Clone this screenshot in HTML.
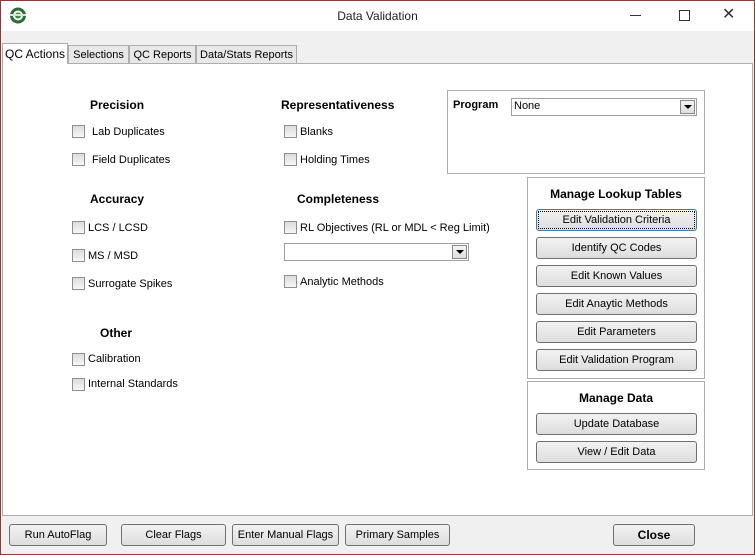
<!DOCTYPE html><html><head><style>
body{margin:0;width:755px;height:555px;overflow:hidden;font-family:"Liberation Sans",Arial,sans-serif;font-size:11px;color:#000;background:#f0f0f0;position:relative}
.a{position:absolute}
.win{left:0;top:0;width:753px;height:553px;border:1px solid #8b3a3a;background:#f0f0f0}
.tb{left:1px;top:1px;width:753px;height:30px;background:#fff}
.panel{left:2px;top:63px;width:749px;height:451px;background:#fff;border:1px solid #adadad}
.tab{top:45px;height:18px;border:1px solid #adadad;border-bottom:none;background:#e8e8e8;line-height:19px;text-align:center;font-size:11px;box-sizing:border-box}
.h{font-weight:bold;font-size:12px}
.cb{width:11px;height:11px;border:1px solid #8e8f8f;background:linear-gradient(#dcdcdc,#f6f6f6)}
.btn{height:20px;border:1px solid #707070;border-radius:3px;background:linear-gradient(#f2f2f2,#dddddd);text-align:center;line-height:20px;font-size:11px}
.grp{border:1px solid #adadad}
.dd{height:16px;border:1px solid #a0a0a0;background:#fff}
.arr{position:absolute;right:1px;top:1px;width:13px;height:12px;border:1px solid #888;background:linear-gradient(#f5f5f5,#ddd)}
.arr:after{content:"";position:absolute;left:3px;top:4px;border-left:4px solid transparent;border-right:4px solid transparent;border-top:4px solid #000}
</style></head><body>
<div class="a win"></div>
<div class="a tb"></div>
<svg class="a" style="left:9px;top:7px" width="18" height="17"><circle cx="9" cy="8.5" r="8" fill="#2f6b3a"/><circle cx="9" cy="8.5" r="5" fill="#fff"/><circle cx="9" cy="8.5" r="3" fill="#3d8b4a"/><rect x="1" y="7" width="16" height="2" fill="#cfe8cf"/></svg>
<div class="a" style="left:0;width:755px;top:9px;text-align:center;font-size:12px;color:#222">Data Validation</div>
<div class="a" style="left:630px;top:15px;width:11px;height:1px;background:#333"></div>
<div class="a" style="left:679px;top:10px;width:9px;height:9px;border:1px solid #333"></div>
<div class="a" style="left:722px;top:4px;font-size:16px;color:#333">✕</div>
<div class="a panel"></div>
<div class="a tab" style="left:2px;top:43px;width:66px;height:21px;background:#fff;line-height:20px;font-size:12px">QC Actions</div>
<div class="a tab" style="left:68px;width:61px">Selections</div>
<div class="a tab" style="left:129px;width:67px">QC Reports</div>
<div class="a tab" style="left:196px;width:101px">Data/Stats Reports</div>

<div class="a h" style="left:90px;top:98px">Precision</div>
<div class="a cb" style="left:72px;top:125px"></div><div class="a" style="left:92px;top:126px">Lab Duplicates</div>
<div class="a cb" style="left:72px;top:153px"></div><div class="a" style="left:92px;top:154px">Field Duplicates</div>
<div class="a h" style="left:90px;top:192px">Accuracy</div>
<div class="a cb" style="left:72px;top:221px"></div><div class="a" style="left:88px;top:222px">LCS / LCSD</div>
<div class="a cb" style="left:72px;top:249px"></div><div class="a" style="left:88px;top:250px">MS / MSD</div>
<div class="a cb" style="left:72px;top:277px"></div><div class="a" style="left:88px;top:278px">Surrogate Spikes</div>
<div class="a h" style="left:100px;top:326px">Other</div>
<div class="a cb" style="left:72px;top:353px"></div><div class="a" style="left:88px;top:353px">Calibration</div>
<div class="a cb" style="left:72px;top:378px"></div><div class="a" style="left:88px;top:378px">Internal Standards</div>

<div class="a h" style="left:281px;top:98px">Representativeness</div>
<div class="a cb" style="left:284px;top:125px"></div><div class="a" style="left:300px;top:126px">Blanks</div>
<div class="a cb" style="left:284px;top:153px"></div><div class="a" style="left:300px;top:154px">Holding Times</div>
<div class="a h" style="left:297px;top:192px">Completeness</div>
<div class="a cb" style="left:284px;top:221px"></div><div class="a" style="left:300px;top:222px">RL Objectives (RL or MDL &lt; Reg Limit)</div>
<div class="a dd" style="left:284px;top:243px;width:183px"><div class="arr"></div></div>
<div class="a cb" style="left:284px;top:275px"></div><div class="a" style="left:300px;top:276px">Analytic Methods</div>

<div class="a grp" style="left:447px;top:90px;width:256px;height:82px"></div>
<div class="a" style="left:453px;top:99px;font-weight:bold">Program</div>
<div class="a dd" style="left:511px;top:98px;width:184px"><span style="position:absolute;left:2px;top:1px">None</span><div class="arr"></div></div>

<div class="a grp" style="left:527px;top:177px;width:176px;height:200px"></div>
<div class="a h" style="left:527px;top:187px;width:178px;text-align:center">Manage Lookup Tables</div>
<div class="a btn" style="left:536px;top:209px;width:159px;border-color:#3c7fb1;outline:1px dotted #000;outline-offset:-3px">Edit Validation Criteria</div>
<div class="a btn" style="left:536px;top:237px;width:159px">Identify QC Codes</div>
<div class="a btn" style="left:536px;top:265px;width:159px">Edit Known Values</div>
<div class="a btn" style="left:536px;top:293px;width:159px">Edit Anaytic Methods</div>
<div class="a btn" style="left:536px;top:321px;width:159px">Edit Parameters</div>
<div class="a btn" style="left:536px;top:349px;width:159px">Edit Validation Program</div>

<div class="a grp" style="left:527px;top:381px;width:176px;height:87px"></div>
<div class="a h" style="left:527px;top:391px;width:178px;text-align:center">Manage Data</div>
<div class="a btn" style="left:536px;top:413px;width:159px">Update Database</div>
<div class="a btn" style="left:536px;top:441px;width:159px">View / Edit Data</div>

<div class="a btn" style="left:9px;top:524px;width:96px">Run AutoFlag</div>
<div class="a btn" style="left:121px;top:524px;width:103px">Clear Flags</div>
<div class="a btn" style="left:232px;top:524px;width:105px">Enter Manual Flags</div>
<div class="a btn" style="left:345px;top:524px;width:103px">Primary Samples</div>
<div class="a btn" style="left:613px;top:524px;width:80px;font-weight:bold;font-size:12px">Close</div>
</body></html>
